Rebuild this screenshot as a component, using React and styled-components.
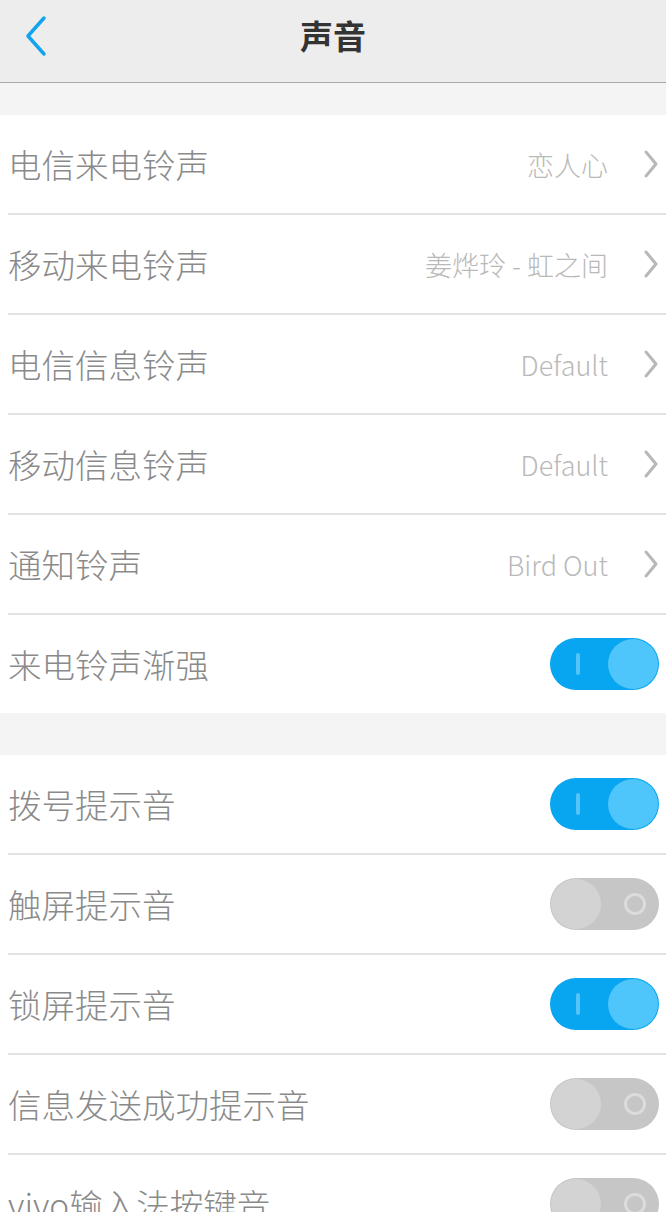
import React from 'react';
import styled, { createGlobalStyle } from 'styled-components';

const GlobalStyle = createGlobalStyle`
  html, body {
    margin: 0;
    padding: 0;
    background: #f4f4f4;
    font-family: 'Noto Sans CJK SC', 'Noto Sans', sans-serif;
    overflow: hidden;
  }
`;

const Page = styled.div`
  width: 666px;
  height: 1212px;
  overflow: hidden;
  background: #f4f4f4;
`;

const Header = styled.div`
  height: 82px;
  background: #ededed;
  border-bottom: 1px solid #a8a8a8;
  display: flex;
  align-items: center;
  justify-content: center;
  position: relative;
`;

const Back = styled.div`
  position: absolute;
  left: 22px;
  top: 14px;
  width: 30px;
  height: 44px;
  display: flex;
`;

const Title = styled.div`
  font-size: 33px;
  font-weight: 700;
  color: #333;
  margin-top: -12px;
`;

const Group = styled.div`
  background: #fff;
  margin-top: ${({ gap }) => gap}px;
`;

const Row = styled.div`
  height: 98px;
  display: flex;
  align-items: center;
  margin-left: 8px;
  padding-right: 7px;
  border-bottom: ${({ last }) => (last ? 'none' : '2px solid #e3e3e3')};
`;

const Label = styled.div`
  flex: 1;
  font-size: 33.5px;
  font-weight: 300;
  color: #8a8a8a;
  margin-top: -2px;
  white-space: nowrap;
`;

const Value = styled.div`
  font-size: 27px;
  font-weight: 300;
  color: #b9b9b9;
  margin-right: 35px;
  font-family: 'Noto Sans CJK SC', 'Open Sans', sans-serif;
`;

const Chevron = styled.svg`
  width: 16px;
  height: 30px;
`;

const Track = styled.div`
  width: 109px;
  height: 52px;
  border-radius: 26px;
  background: ${({ on }) => (on ? '#08a6f1' : '#c6c6c6')};
  position: relative;
  display: flex;
  align-items: center;
  justify-content: ${({ on }) => (on ? 'flex-end' : 'flex-start')};
  padding: 1px;
  box-sizing: border-box;
`;

const Knob = styled.div`
  width: 50px;
  height: 50px;
  border-radius: 50%;
  background: ${({ on }) => (on ? '#4fc6fb' : '#d3d3d3')};
`;

const OnMark = styled.div`
  position: absolute;
  left: 26px;
  top: 15px;
  width: 4px;
  height: 22px;
  border-radius: 2px;
  background: #52c4f7;
`;

const OffMark = styled.div`
  position: absolute;
  right: 13px;
  top: 15px;
  width: 22px;
  height: 22px;
  border-radius: 50%;
  border: 3px solid #dcdcdc;
  box-sizing: border-box;
`;

const Toggle = ({ on }) => (
  <Track on={on}>
    {on ? <OnMark /> : <OffMark />}
    <Knob on={on} />
  </Track>
);

const Arrow = () => (
  <Chevron viewBox="0 0 16 30">
    <path d="M3 3 L13 15 L3 27" fill="none" stroke="#b8b8b8" strokeWidth="3" strokeLinecap="round" strokeLinejoin="round" />
  </Chevron>
);

const group1 = [
  { label: '电信来电铃声', value: '恋人心' },
  { label: '移动来电铃声', value: '姜烨玲 - 虹之间' },
  { label: '电信信息铃声', value: 'Default' },
  { label: '移动信息铃声', value: 'Default' },
  { label: '通知铃声', value: 'Bird Out' },
  { label: '来电铃声渐强', toggle: true },
];

const group2 = [
  { label: '拨号提示音', toggle: true },
  { label: '触屏提示音', toggle: false },
  { label: '锁屏提示音', toggle: true },
  { label: '信息发送成功提示音', toggle: false },
  { label: 'vivo输入法按键音', toggle: false },
];

const renderRow = (item, i, arr, lastBorder) => (
  <Row key={i} last={i === arr.length - 1 && !lastBorder}>
    <Label>{item.label}</Label>
    {item.value !== undefined ? (
      <>
        <Value>{item.value}</Value>
        <Arrow />
      </>
    ) : (
      <Toggle on={item.toggle} />
    )}
  </Row>
);

export default function App() {
  return (
    <Page>
      <GlobalStyle />
      <Header>
        <Back>
          <svg width="30" height="44" viewBox="0 0 30 44">
            <path d="M22 4 L6 22 L22 40" fill="none" stroke="#14a3ee" strokeWidth="3.5" strokeLinecap="round" strokeLinejoin="round" />
          </svg>
        </Back>
        <Title>声音</Title>
      </Header>
      <Group gap={32}>{group1.map((it, i, a) => renderRow(it, i, a, false))}</Group>
      <Group gap={42}>{group2.map((it, i, a) => renderRow(it, i, a, true))}</Group>
    </Page>
  );
}
